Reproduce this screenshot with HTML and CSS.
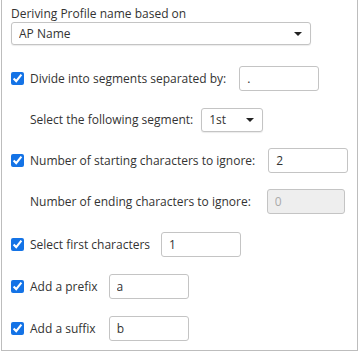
FILE: index.html
```html
<!DOCTYPE html>
<html>
  <head>
    <title>Profile name</title>
    <link rel="stylesheet" href="styles.css">
  </head>
  <body>
    <div class="panel">
      <div class="title">Deriving Profile name based on</div>
      <div class="select-wrap wide">
        <select class="select">
          <option>AP Name</option>
        </select>
        <span class="caret"></span>
      </div>

      <div class="row">
        <input type="checkbox" class="check" checked>
        <span class="label">Divide into segments separated by:</span>
        <input type="text" class="field" value=".">
      </div>
      <div class="row indent">
        <span class="label narrow">Select the following segment:</span>
        <div class="select-wrap small">
          <select class="select">
            <option>1st</option>
          </select>
          <span class="caret"></span>
        </div>
      </div>
      <div class="row">
        <input type="checkbox" class="check" checked>
        <span class="label">Number of starting characters to ignore:</span>
        <input type="text" class="field" value="2">
      </div>
      <div class="row indent">
        <span class="label wider">Number of ending characters to ignore:</span>
        <input type="text" class="field slim" value="0" disabled>
      </div>

      <div class="row tall first">
        <input type="checkbox" class="check" checked>
        <span class="label short">Select first characters</span>
        <input type="text" class="field" value="1">
      </div>
      <div class="row tall">
        <input type="checkbox" class="check" checked>
        <span class="label short">Add a prefix</span>
        <input type="text" class="field" value="a">
      </div>
      <div class="row tall">
        <input type="checkbox" class="check" checked>
        <span class="label">Add a suffix</span>
        <input type="text" class="field" value="b">
      </div>
    </div>
  </body>
</html>
```

FILE: styles.css
```css
body {
  margin: 0;
  font-family: "Open Sans", "Liberation Sans", sans-serif;
  font-size: 12px;
  color: #333333;
  background-color: #ffffff;
}
.panel {
  box-sizing: border-box;
  width: 357px;
  height: 351px;
  margin-left: 1px;
  padding: 6px 0 0 9px;
  border: 1px solid #bdbdbd;
  border-top: none;
}
.title {
  height: 16px;
  line-height: 16px;
}
.select-wrap {
  position: relative;
  box-sizing: border-box;
  height: 23px;
}
.select-wrap.wide {
  width: 300px;
  margin-bottom: 13px;
}
.select-wrap.small {
  width: 62px;
  height: 24px;
}
.select {
  appearance: none;
  -webkit-appearance: none;
  box-sizing: border-box;
  width: 100%;
  height: 100%;
  margin: 0;
  padding: 0 0 0 7px;
  border: 1px solid #c4c4c4;
  border-radius: 3px;
  background-color: #ffffff;
  font-family: inherit;
  font-size: 12px;
  color: #333333;
  box-shadow: 0 1px 1px rgba(0,0,0,0.08);
}
.caret {
  position: absolute;
  right: 9px;
  top: 10px;
  width: 0;
  height: 0;
  border-left: 4px solid transparent;
  border-right: 4px solid transparent;
  border-top: 4px solid #222222;
}
.row {
  display: flex;
  align-items: center;
  height: 41px;
}
.row.tall {
  height: 42px;
}
.row.first {
  margin-top: 1px;
}
.row.indent {
  padding-left: 19px;
}
.check {
  width: 13px;
  height: 13px;
  margin: 0 6px 0 0;
  accent-color: #1473e6;
}
.label {
  margin-right: 13px;
  white-space: nowrap;
}
.label.narrow {
  margin-right: 8px;
}
.label.wider {
  margin-right: 16px;
}
.label.short {
  margin-right: 11px;
}
.field {
  box-sizing: border-box;
  width: 80px;
  height: 25px;
  padding: 0 7px;
  border: 1px solid #c4c4c4;
  border-radius: 3px;
  font-family: inherit;
  font-size: 12px;
  color: #333333;
  background-color: #ffffff;
}
.field.slim {
  width: 78px;
}
.field:disabled {
  background-color: #eeeeee;
  color: #aaaaaa;
}
```
